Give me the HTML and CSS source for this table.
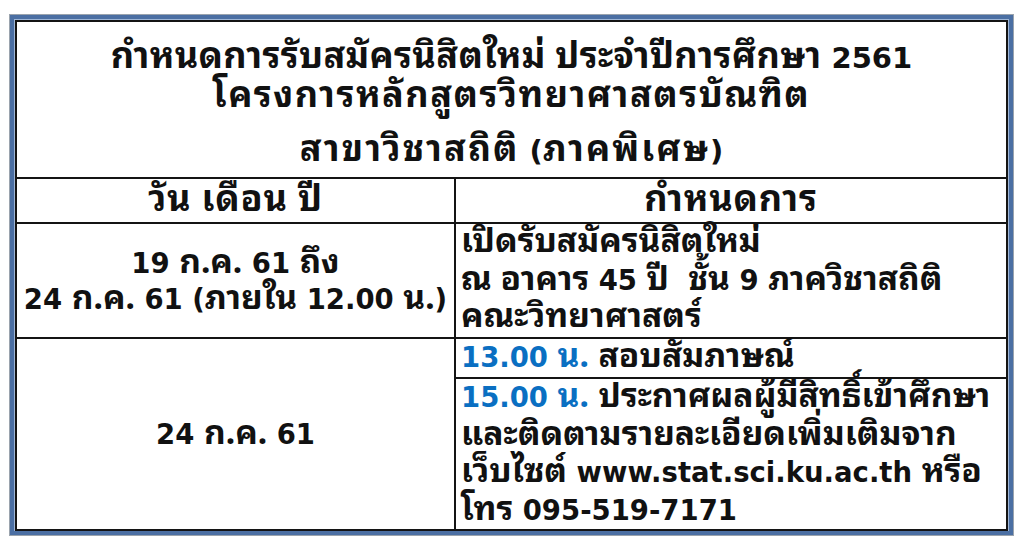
FILE: index.html
```html
<!DOCTYPE html>
<html lang="th">
<head>
<meta charset="utf-8">
<title>กำหนดการรับสมัครนิสิตใหม่</title>
<link rel="stylesheet" href="styles.css">
</head>
<body>
<div class="frame">
  <table class="sched">
    <colgroup><col class="c1"><col class="c2"></colgroup>
    <tr class="r-title">
      <td colspan="2" class="title">
        <div class="t1"><span class="th">กำหนดการรับสมัครนิสิตใหม่ ประจำปีการศึกษา</span> 2561</div>
        <div class="t2"><span class="th">โครงการหลักสูตรวิทยาศาสตรบัณฑิต</span></div>
        <div class="t3"><span class="th">สาขาวิชาสถิติ</span> (<span class="th">ภาคพิเศษ</span>)</div>
      </td>
    </tr>
    <tr class="r-head">
      <th class="head"><span class="th">วัน เดือน ปี</span></th>
      <th class="head"><span class="th">กำหนดการ</span></th>
    </tr>
    <tr class="r-one">
      <td class="date">19 <span class="th">ก.ค.</span> 61 <span class="th">ถึง</span><br>24 <span class="th">ก.ค.</span> 61 (<span class="th">ภายใน</span> 12.00 <span class="th">น.</span>)</td>
      <td class="desc"><span class="th">เปิดรับสมัครนิสิตใหม่</span><br><span class="th">ณ อาคาร</span> 45 <span class="th">ปี</span>&nbsp; <span class="th">ชั้น</span> 9 <span class="th">ภาควิชาสถิติ</span><br><span class="th">คณะวิทยาศาสตร์</span></td>
    </tr>
    <tr class="r-two">
      <td class="date" rowspan="2">24 <span class="th">ก.ค.</span> 61</td>
      <td class="desc"><span class="time">13.00 <span class="th">น.</span></span> <span class="th">สอบสัมภาษณ์</span></td>
    </tr>
    <tr class="r-three">
      <td class="desc"><span class="time">15.00 <span class="th">น.</span></span> <span class="th">ประกาศผลผู้มีสิทธิ์เข้าศึกษา</span><br><span class="th">และติดตามรายละเอียดเพิ่มเติมจาก</span><br><span class="th">เว็บไซต์</span> www.stat.sci.ku.ac.th <span class="th">หรือ</span><br><span class="th">โทร</span> 095-519-7171</td>
    </tr>
  </table>
</div>
</body>
</html>
```
FILE: styles.css
```css
html, body {
  margin: 0;
  padding: 0;
  background: #ffffff;
}
body {
  width: 1024px;
  height: 551px;
  overflow: hidden;
  padding-top: 14px;
  padding-left: 9px;
  box-sizing: border-box;
}
.frame {
  width: 1005px;
  height: 522px;
  box-sizing: border-box;
  border: 1px solid #9aa3ad;
  background: #4b6fa3;
  padding: 5px;
  position: relative;
}
.frame::after {
  content: "";
  position: absolute;
  left: 4px; top: 4px; right: 4px; bottom: 4px;
  border: 1px solid #9fb6d6;
  pointer-events: none;
}
.sched {
  width: 993px;
  height: 510px;
  border-collapse: collapse;
  background: #ffffff;
  table-layout: fixed;
  font-family: "DejaVu Sans", Tahoma, "Noto Sans Thai Looped", sans-serif;
  font-weight: bold;
  font-size: 27.5px;
  color: #111111;
  position: relative;
  z-index: 1;
}
.th {
  font-family: "Noto Sans Thai Looped", "Noto Sans Thai", Tahoma, sans-serif;
  font-size: 33.5px;
  line-height: 0;
}
.c1 { width: 439px; }
.sched td, .sched th {
  border: 2px solid #141414;
  padding: 0;
}
.sched .r-title { height: 157px; }
.sched .title {
  text-align: center;
  vertical-align: top;
  padding-top: 16px;
  line-height: 40px;
  white-space: nowrap;
  font-size: 29px;
}
.sched .title .th,
.sched .head .th {
  font-size: 36px;
  letter-spacing: 0.8px;
}
.sched .t1 .th { letter-spacing: 0.3px; }
.sched .t2 .th { letter-spacing: 1.5px; }
.sched .t3 .th { letter-spacing: 2.1px; }
.t2 { margin-top: -1px; }
.t3 { margin-top: 14px; }
.r-head { height: 45px; }
.sched .head {
  font-weight: bold;
  text-align: center;
  vertical-align: middle;
  line-height: 40px;
}
.r-one { height: 115px; }
.r-two { height: 40px; }
.sched .date {
  text-align: center;
  vertical-align: middle;
  line-height: 36px;
  white-space: nowrap;
}
.sched .desc {
  text-align: left;
  vertical-align: top;
  padding: 0 0 0 5px;
  line-height: 37.5px;
  white-space: nowrap;
}
.time { color: #0a6fc2; }
```
